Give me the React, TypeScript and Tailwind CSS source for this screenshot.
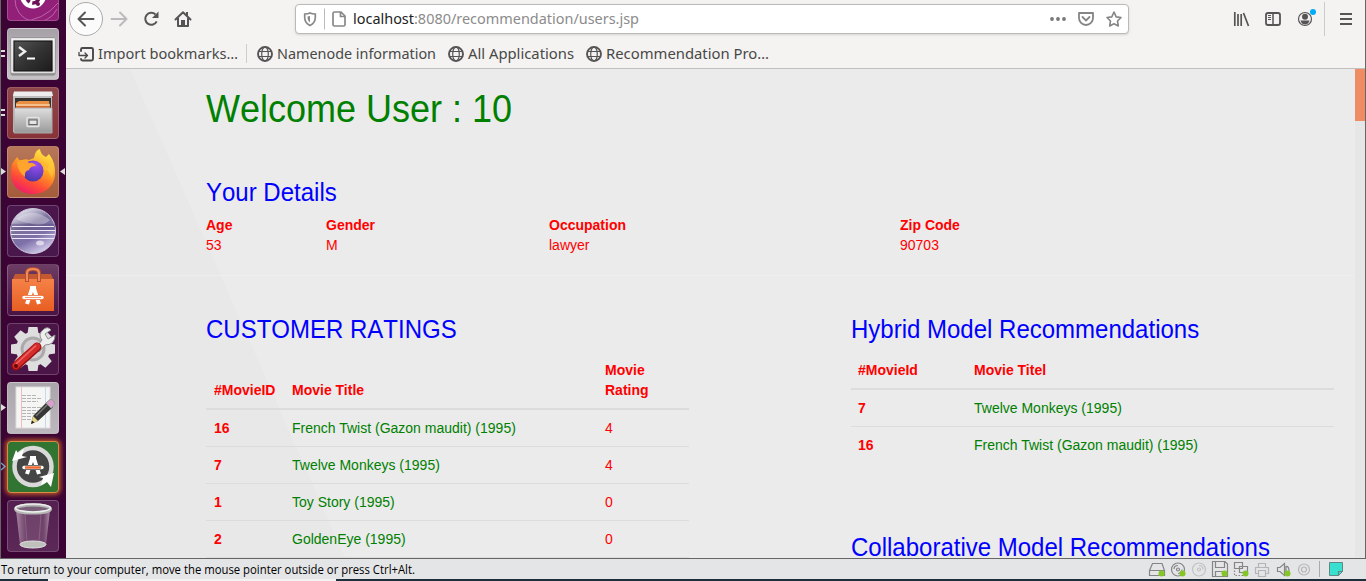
import React from 'react';

const UBUNTU = "font-['Noto_Sans',sans-serif]";

function Label({ text, w, className = '' }: { text: React.ReactNode; w: number; className?: string }) {
  return (
    <svg width={w} height={24} className={`shrink-0 overflow-visible ${className}`}>
      <text x={0} y={17} textLength={w} lengthAdjust="spacingAndGlyphs" fill="currentColor">{text}</text>
    </svg>
  );
}

function T({ children, className = '' }: { children: React.ReactNode; className?: string }) {
  return <span className={`block origin-[0_75%] scale-y-[1.06] ${className}`}>{children}</span>;
}

function Heading({ children, className = '' }: { children: React.ReactNode; className?: string }) {
  return <h3 className={`h-[26px] origin-[0_75%] translate-y-px scale-y-[1.05] whitespace-nowrap text-[24px] leading-[26px] text-[#00f] [font-kerning:none] ${className}`}>{children}</h3>;
}

function Tile({ children, className }: { children?: React.ReactNode; className: string }) {
  return (
    <div className={`h-[52px] w-[52px] shrink-0 overflow-hidden rounded-[4px] border border-white/20 ${className}`}>
      <svg width="52" height="52" viewBox="0 0 52 52" className="-m-px">{children}</svg>
    </div>
  );
}

function AGlyph({ x = 0, y = 0, bar = '#fff' }: { x?: number; y?: number; bar?: string }) {
  return (
    <g transform={`translate(${x} ${y})`} fill="none">
      <path d="M3 18 L8.500 1 M15 18 L9.500 1" stroke="#fff" strokeWidth="4" />
      <path d="M6 1.500 H12" stroke="#fff" strokeWidth="3" />
      <path d="M-0.500 11.500 H18.500" stroke={bar === '#fff' ? '#e9602a' : '#444'} strokeWidth="5" />
      <path d="M0 11.500 H18" stroke="#fff" strokeWidth="3.400" strokeLinecap="round" />
      <path d="M1 11.500 H17" stroke={bar === '#fff' ? '#ef7a48' : bar} strokeWidth={bar === '#fff' ? 0.8 : 2.6} />
    </g>
  );
}

function Launcher() {
  return (
    <div className="relative flex w-[65px] shrink-0 flex-col overflow-hidden bg-[#3c0434] pl-[6px]">
      <svg width="0" height="0" className="absolute">
        <defs>
          <linearGradient id="steel" x1="0" y1="0" x2="0" y2="1"><stop offset="0" stopColor="#dedede" /><stop offset="1" stopColor="#999" /></linearGradient>
          <linearGradient id="screen" x1="0" y1="0" x2="1" y2="1"><stop offset="0" stopColor="#555" /><stop offset=".5" stopColor="#333" /><stop offset="1" stopColor="#1c1c1c" /></linearGradient>
          <linearGradient id="fire" x1=".8" y1="0" x2=".3" y2="1"><stop offset="0" stopColor="#fff14a" /><stop offset=".45" stopColor="#ff9a20" /><stop offset=".75" stopColor="#ff4a38" /><stop offset="1" stopColor="#ee1b6a" /></linearGradient>
          <radialGradient id="violet" cx=".65" cy=".2" r=".85"><stop offset="0" stopColor="#a04cf2" /><stop offset="1" stopColor="#4338a8" /></radialGradient>
          <linearGradient id="orb" x1=".2" y1="0" x2=".7" y2="1"><stop offset="0" stopColor="#f3f3fa" /><stop offset=".38" stopColor="#7a719c" /><stop offset=".65" stopColor="#7d70a8" /><stop offset="1" stopColor="#d9d2f1" /></linearGradient>
          <linearGradient id="bag" x1="0" y1="0" x2="0" y2="1"><stop offset="0" stopColor="#f58248" /><stop offset="1" stopColor="#e85e22" /></linearGradient>
          <linearGradient id="glass" x1="0" y1="0" x2="1" y2="0"><stop offset="0" stopColor="#c3a9bd" stopOpacity=".75" /><stop offset=".3" stopColor="#a88aa2" stopOpacity=".3" /><stop offset=".8" stopColor="#a88aa2" stopOpacity=".3" /><stop offset="1" stopColor="#c9b0c3" stopOpacity=".75" /></linearGradient>
        </defs>
      </svg>
      <div className="-mt-[31px] flex flex-col gap-[7px]">
        <Tile className="bg-[#922078]">
          <path d="M8 30 A22 22 0 0 0 50 40 M14 52 Q36 52 51 34" stroke="#bb62a8" fill="none" />
          <circle cx="26" cy="26.500" r="13" fill="#fff" />
          <circle cx="26" cy="28" r="6" fill="none" stroke="#6d1256" strokeWidth="3.500" strokeDasharray="10 2.600" />
          <circle cx="31" cy="35" r="2" fill="#6d1256" />
        </Tile>
        <Tile className="bg-gradient-to-b from-[#a6a1a6] to-[#c6c2c6]">
          <rect x="4" y="10" width="44" height="37" rx="1.500" fill="url(#steel)" stroke="#858585" />
          <rect x="5" y="11" width="42" height="33" fill="none" stroke="#f4f4f4" strokeWidth="1.500" />
          <rect x="7" y="13" width="38" height="30" fill="url(#screen)" stroke="#111" />
          <path d="M12 19 L18 23.500 L12 28" fill="none" stroke="#eee" strokeWidth="2.400" />
          <path d="M20 30.500 H28" stroke="#fff" strokeWidth="2.200" />
        </Tile>
        <Tile className="bg-gradient-to-b from-[#8d474a] to-[#893339]">
          <path d="M7 5 H45 V45 H6 V9 Z" fill="#bebebe" />
          <path d="M7 4.500 H45 L46 9 H6 Z" fill="#ededed" />
          <rect x="8" y="11" width="36" height="11" fill="#343330" />
          <path d="M9 16 L12 14 H42 L43 21 H9 Z" fill="#e98f43" /><path d="M9 18 H43" stroke="#fff0d5" />
          <path d="M9 20 H43" stroke="#d15b20" strokeWidth="1.500" />
          <path d="M7 21 H45 V46 H7 Z" fill="url(#steel)" stroke="#aaa" />
          <rect x="20" y="30.500" width="12" height="9" rx="1" fill="#aaa" stroke="#e4e4e4" strokeWidth="1.500" />
          <rect x="22" y="33" width="8" height="4.500" fill="#e5e5e5" stroke="#656565" />
        </Tile>
        <Tile className="bg-gradient-to-b from-[#b77759] to-[#a45c3b]">
          <path d="M5 18 L10 11 L13 15 Q18 12 22 14 L27 12 Q28 4 33 3 Q33 8 39 11 L42 8 Q49 17 48 29 C47 41 37 48 26 48 C12 48 3 38 4 27 Q4 22 5 18 Z" fill="url(#fire)" />
          <circle cx="26" cy="25" r="10.500" fill="url(#violet)" />
          <path d="M10 15 Q17 12 22 17 Q27 16 29 20 Q23 20 22 24 Q17 25 18 31 Q10 25 10 15" fill="#ffa52d" />
          <path d="M32 9 Q38 16 38 25 Q44 20 42 11 Q49 20 45 32" fill="#ffc83a" opacity=".7" />
        </Tile>
        <Tile className="bg-[#49174b]">
          <circle cx="26" cy="26" r="22.500" fill="url(#orb)" stroke="#cfc9dc" />
          <path d="M9 14 Q26 1 43 15 Q35 23 22 18 Q14 17 9 14" fill="#fff" opacity=".3" />
          <path d="M4 20.500 H48 M4 24 H48" stroke="#5a4a80" strokeWidth="3.500" opacity=".45" />
          <path d="M5 21.500 H47 M4 25.500 H48 M4 29.500 H48 M5 33.500 H47" stroke="#eeeaf8" strokeWidth="1.200" />
          <ellipse cx="33" cy="38" rx="4" ry="2.500" fill="#fff" opacity=".6" />
        </Tile>
        <Tile className="bg-gradient-to-b from-[#6c3c64] to-[#491344]">
          <path d="M8 10 H44 L47 17 H5 Z" fill="#c35930" />
          <path d="M5 15 H47 V47 H5 Z" fill="url(#bag)" />
          <path d="M20 18 V9 Q20 5 26 5 Q32 5 32 9 V18" fill="none" stroke="#b94e2c" strokeWidth="4" />
          <path d="M20 17 V9 Q20 5 26 5 Q32 5 32 9 V17" fill="none" stroke="#ef8a5c" strokeWidth="2" />
          <AGlyph x={17} y={22} />
        </Tile>
        <Tile className="bg-[#4b1548]">
          <g fill="#dedede">
            {[0, 45, 90, 135, 180, 225, 270, 315].map((a) => <path key={a} d="M21.500 4 H30.500 L32 14 H20 Z" transform={`rotate(${a} 26 26)`} />)}
            <circle cx="26" cy="26" r="17" />
          </g>
          <circle cx="26" cy="26" r="11" fill="#d3ccd3" stroke="#aaa" strokeWidth="3" />
          <path d="M29 25 L35 17 Q30 11 37 6 Q41 3 44 7 L38 11 L41 16 L48 12 Q48 22 38 22 L32 29 Z" fill="#eee" stroke="#8e8e8e" />
          <path d="M9 43 L30 24" stroke="#9e1010" strokeWidth="9" strokeLinecap="round" />
          <path d="M9 42.500 L30 23.500" stroke="#d42b2b" strokeWidth="6.500" strokeLinecap="round" />
          <path d="M9 41 L29 22.500" stroke="#ed6966" strokeWidth="1.500" /><circle cx="9" cy="43" r="2" fill="#6c0707" />
        </Tile>
        <Tile className="bg-gradient-to-b from-[#aaa5aa] to-[#bdb8bd]">
          <rect x="9" y="5" width="34" height="41" fill="#f5f5f3" stroke="#ddd" />
          <path d="M14.500 5 V46" stroke="#f2b9c1" /><path d="M38.500 5 V46" stroke="#c4d8ee" />
          <path d="M15 13.500 H29 M15 16.500 H35 M15 19.500 H31 M15 25.500 H34 M15 28.500 H31 M15 31.500 H32 M15 34.500 H25 M15 37.500 H27" stroke="#b5b5b5" strokeDasharray="4 1" />
          <path d="M24 42 L26 34 L40 20 L46 25 L31 39 Z" fill="#363735" />
          <path d="M29 34 L42 21" stroke="#777" strokeWidth="1.500" />
          <path d="M24 42 L26 34 L31 39 Z" fill="#e8d78a" /><path d="M24 42 L25 38.500 L27.500 40.500 Z" fill="#222" />
          <path d="M39 21 L43 17.500 Q48 18 47.500 22.500 L44 26 Z" fill="#d9a0cc" stroke="#999" />
        </Tile>
        <Tile className="border-[#dc8b42]! bg-[#327432] shadow-[0_0_4px_2px_#b2532b]">
          <circle cx="26" cy="25.500" r="18.500" fill="#454545" stroke="#d9d9d9" strokeWidth="4.500" />
          <path d="M5 20 L9 9 L11 12 L17 8 L15 15 L20 16 Z" fill="#fff" />
          <path d="M47 32 L44 46 L40 41 L34 44 L36 37 L32 36 Z" fill="#fff" />
          <AGlyph x={17} y={15} bar="#f06832" />
        </Tile>
        <Tile className="bg-gradient-to-b from-[#53204f] to-[#5c2858]">
          <path d="M9 10 H43 L39 45 Q26 51 13 45 Z" fill="url(#glass)" />
          <ellipse cx="26" cy="44.500" rx="13" ry="3.500" fill="#bfc0bb" stroke="#dedede" />
          <path d="M18 14 L20 42 M34 14 L32 42" stroke="#d1b6cb" opacity=".25" />
          <ellipse cx="26" cy="9" rx="17.500" ry="4" fill="#796078" stroke="#b5b5b3" strokeWidth="3" />
          <ellipse cx="26" cy="8" rx="17.500" ry="4" fill="none" stroke="#eee" strokeWidth="1.500" />
        </Tile>
      </div>
      <svg width="65" height="558" className="absolute inset-0" fill="#ddd">
        <path d="M0 50 h4 v2 h-4z M0 55 h4 v2 h-4z M0 109 h4 v2 h-4z M0 114 h4 v2 h-4z" />
        <path d="M0 168 l5 3.500 l-5 3.500z M64 168 l-5 3.500 l5 3.500z M0 404 l5 3.500 l-5 3.500z" />
        <path d="M0 463 l4 3.500 l-4 3.500" fill="none" stroke="#77a9d5" strokeWidth="1.300" />
      </svg>
    </div>
  );
}

function Globe() {
  return (
    <svg width="16" height="16" viewBox="0 0 16 16" fill="none" stroke="#555" strokeWidth="1.200" className="shrink-0">
      <circle cx="8" cy="8" r="7" strokeWidth="1.900" /><ellipse cx="8" cy="8" rx="3.300" ry="7" /><path d="M1.500 5.500 H14.500 M1.500 10.500 H14.500" />
    </svg>
  );
}

function NavBar() {
  return (
    <div className="flex h-[39px] items-center">
      <svg width="229" height="39" viewBox="66 0 229 39" fill="none" stroke="#555" strokeWidth="2" className="shrink-0">
        <circle cx="86" cy="19" r="16.500" fill="#fbfbfb" stroke="#aaa" strokeWidth="1" />
        <path d="M93.500 19 H79 M85 12.500 L78.500 19 L85 25.500" strokeLinecap="round" strokeLinejoin="round" />
        <path d="M111.500 19 H126 M120 12.500 L126.500 19 L120 25.500" stroke="#bbb" strokeLinecap="round" strokeLinejoin="round" />
        <path d="M155.500 14.500 A6 6 0 1 0 156.700 21.300" /><path d="M158.500 11.500 V18 H152 Z" fill="#555" stroke="none" />
        <path d="M175.500 19.500 L183 12.300 L190.500 19.500 M178 18 V26 H188 V18" strokeLinecap="round" strokeLinejoin="round" /><path d="M181 26 V20 H185 V26 Z" fill="#555" stroke="none" /><path d="M187 12 V16" />
      </svg>
      <div className="-mt-px flex h-[30px] w-[834px] shrink-0 items-center rounded-[4px] border border-[#bcbab8] bg-white shadow-sm">
        <svg width="57" height="28" viewBox="296 5 57 28" fill="none" stroke="#888" strokeWidth="1.700" className="shrink-0">
          <path d="M310 13 C308 14 306 14 304.700 14 V18 C305 22 307 24 310 25.500 C313 24 315 22 315.300 18 V14 C314 14 312 14 310 13 Z" /><path d="M310 16 V22.500 C308 21 307.500 19 307.500 16.500 Z" fill="#888" stroke="none" />
          <path d="M324.500 8.500 V29.500" stroke="#bbb" strokeWidth="1" />
          <path d="M334.500 12 H341 L345 16 V24.500 Q345 26 343.500 26 H334.500 Q333 26 333 24.500 V13.500 Q333 12 334.500 12 Z M340.500 12 V16.500 H345" />
        </svg>
        <Label w={286} text={<><tspan fill="#222">localhost</tspan><tspan fill="#8b8b8b">:8080/recommendation/users.jsp</tspan></>} className={`${UBUNTU} text-[15px]`} />
        <svg width="86" height="28" viewBox="1042 5 86 28" fill="none" stroke="#858585" strokeWidth="1.800" className="ml-auto shrink-0">
          <g fill="#777" stroke="none"><circle cx="1052" cy="19" r="1.900" /><circle cx="1058" cy="19" r="1.900" /><circle cx="1064" cy="19" r="1.900" /></g>
          <path d="M1079 13 H1093 V18 A7 7 0 0 1 1079 18 Z" strokeLinejoin="round" /><path d="M1082.500 17 L1086 20.500 L1089.500 17" strokeLinecap="round" />
          <path d="M1114 12 L1116.200 16.900 L1121 17.500 L1117.500 21 L1118.300 26 L1114 23.700 L1109.700 26 L1110.500 21 L1107 17.500 L1111.800 16.900 Z" strokeLinejoin="round" strokeWidth="1.600" />
        </svg>
      </div>
      <svg width="236" height="39" viewBox="1129 0 236 39" fill="none" stroke="#555" strokeWidth="1.800" className="shrink-0">
        <path d="M1234.800 12 V26 M1238 14 V26 M1241.200 14 V26 M1243.500 13 L1248.500 26" strokeWidth="1.700" />
        <rect x="1266" y="13" width="14" height="12" rx="2" /><path d="M1273 13 V25" strokeWidth="1.500" /><path d="M1268 15.500 H1271 M1268 17.500 H1271 M1268 19.500 H1271" strokeWidth="1" />
        <circle cx="1305" cy="19" r="6.500" strokeWidth="1.200" /><circle cx="1305" cy="16.800" r="3" fill="#555" stroke="none" /><path d="M1300.500 20.500 H1309.500 Q1308.500 24.500 1305 24.500 Q1301.500 24.500 1300.500 20.500 Z" fill="#555" stroke="none" />
        <circle cx="1313" cy="12" r="3" fill="#00adf5" stroke="none" />
        <path d="M1324.500 2 V36" stroke="#ccc" strokeWidth="1" /><path d="M1340 14 H1352 M1340 19 H1352 M1340 24 H1352" strokeWidth="2" />
      </svg>
    </div>
  );
}

function Bookmarks() {
  return (
    <div className={`flex h-[30px] items-center border-b border-[#c2c0be] pl-3 text-[15px] text-[#484848] ${UBUNTU}`}>
      <svg width="16" height="16" viewBox="0 0 16 16" fill="none" stroke="#484848" strokeWidth="1.900" strokeLinecap="round" strokeLinejoin="round" className="shrink-0"><path d="M3 5 V3.500 Q3 2 4.500 2 H13.500 Q15 2 15 3.500 V13 Q15 14.500 13.500 14.500 H4.500 Q3 14.500 3 13" /><path d="M1 6.500 V9.500 H9.500 M7 7 L9.500 9.500 L7 12" strokeWidth="1.300" /></svg>
      <Label w={140} text="Import bookmarks…" className="ml-1" />
      <div className="ml-2 mr-2.5 h-[19px] w-px bg-[#cfcdcb]" />
      <Globe /><Label w={159} text="Namenode information" className="ml-1 mr-3" />
      <Globe /><Label w={106} text="All Applications" className="ml-1 mr-3" />
      <Globe /><Label w={163} text="Recommendation Pro…" className="ml-1" />
    </div>
  );
}

const ratings = [
  ['16', 'French Twist (Gazon maudit) (1995)', '4'],
  ['7', 'Twelve Monkeys (1995)', '4'],
  ['1', 'Toy Story (1995)', '0'],
  ['2', 'GoldenEye (1995)', '0'],
];
const hybrid = [['7', 'Twelve Monkeys (1995)'], ['16', 'French Twist (Gazon maudit) (1995)']];
const details = [['Age', '53'], ['Gender', 'M'], ['Occupation', 'lawyer'], ['Zip Code', '90703']];

function Content() {
  return (
    <div className="relative flex min-h-0 flex-1 overflow-hidden bg-[#ebebeb] font-['Liberation_Sans',sans-serif] text-[14px] leading-5 text-[#f00]">
      <svg width="1289" height="489" className="absolute inset-0"><path d="M0 0 H64 L279 489 H0 Z" fill="#e8e8e8" /><path d="M0 206.500 H1289" stroke="#eeeeee" /></svg>
      <div className="relative flex-1 pl-[140px] pt-5">
        <h1 className="h-10 origin-[0_82%] translate-y-px scale-y-[1.06] text-[36px] leading-10 text-[#008000] [font-kerning:none]">Welcome User : 10</h1>
        <Heading className="mt-[50px]">Your Details</Heading>
        <div className="mt-[10px] grid grid-cols-[120px_223px_351px_1fr]">
          {details.map(([k, v]) => <div key={k}><T className="font-bold">{k}</T><T>{v}</T></div>)}
        </div>
        <div className="mt-[61px] flex gap-[162px]">
          <section className="w-[483px]">
            <Heading>CUSTOMER RATINGS</Heading>
            <div className="mt-[10px] grid h-[58px] grid-cols-[78px_313px_84px] items-end border-b-2 border-[#dcdcdc] pb-2 pl-2 font-bold">
              <T>#MovieID</T><T>Movie Title</T><div><T>Movie</T><T>Rating</T></div>
            </div>
            {ratings.map(([id, title, score]) => (
              <div key={id} className="grid h-[37px] grid-cols-[78px_313px_84px] border-b border-[#dcdcdc] pl-2 pt-2">
                <T className="font-bold">{id}</T><T className="text-[#008000]">{title}</T><T>{score}</T>
              </div>
            ))}
          </section>
          <section className="w-[483px]">
            <Heading>Hybrid Model Recommendations</Heading>
            <div className="mt-[10px] grid h-[38px] grid-cols-[116px_1fr] border-b-2 border-[#dcdcdc] pl-[7px] pt-2 font-bold"><T>#MovieId</T><T>Movie Titel</T></div>
            {hybrid.map(([id, title]) => (
              <div key={id} className="grid h-[37px] grid-cols-[116px_1fr] border-b border-[#dcdcdc] pl-[7px] pt-2 last-of-type:border-0">
                <T className="font-bold">{id}</T><T className="text-[#008000]">{title}</T>
              </div>
            ))}
            <Heading className="mt-[70px]">Collaborative Model Recommendations</Heading>
          </section>
        </div>
      </div>
      <div className="relative w-[10px] bg-[#e6e6e6]"><div className="h-[52px] bg-[#f08c64]" /></div>
    </div>
  );
}

function StatusBar() {
  return (
    <div className="flex h-5 shrink-0 items-center justify-between bg-[#e4e5e7] pl-px font-['Open_Sans',sans-serif] text-[12px] text-black">
      <Label w={414} text="To return to your computer, move the mouse pointer outside or press Ctrl+Alt." className="h-5 -translate-y-0.5" />
      <svg width="218" height="20" viewBox="1148 560 218 20" fill="none" stroke="#858585" strokeWidth="1.200">
        <path d="M1149.500 571.500 L1152.500 564.500 H1162 L1164.500 571.500 V576.500 H1149.500 Z M1149.500 571.500 H1164.500" />
        <circle cx="1178" cy="570.500" r="6.500" /><circle cx="1178" cy="570.500" r="1.500" /><path d="M1174 570 Q1174 566.500 1178 566.500 M1182 570.500 Q1182 574.500 1178 574.500" />
        <g stroke="#c2c2c2"><circle cx="1199" cy="570.500" r="6.500" /><circle cx="1199" cy="570.500" r="1.500" /><path d="M1199 566.500 Q1203 566.500 1203 570.500" /></g>
        <path d="M1212.500 562.500 H1225 L1227.500 565 V577.500 H1212.500 Z M1215.500 562.500 V568.500 H1224.500 V562.500 M1215.500 577.500 V572.500 H1224.500 V577.500" />
        <path d="M1234.500 563.500 H1242.500 V569.500 H1234.500 Z M1239.500 567.500 H1247.500 V573.500 H1239.500 Z" /><path d="M1234.500 571.500 V576.500 H1244" strokeDasharray="1.500 1.500" />
        <g stroke="#b5b5b5"><path d="M1258.500 568.500 V564.500 H1265.500 V568.500 M1258.500 574.500 H1255.500 V568.500 H1268.500 V574.500 H1265.500 M1258.500 571.500 H1265.500 V577.500 H1258.500 Z" /><circle cx="1304" cy="570.500" r="5.500" /><circle cx="1304" cy="570.500" r="2.500" /></g>
        <path d="M1277.500 568.500 H1280 L1284.500 564.500 V576.500 L1280 572.500 H1277.500 Z M1286 573 V567.500 Q1289 567 1289 572" />
        <g fill="#83c625" stroke="none"><circle cx="1161.500" cy="574.500" r="3" /><circle cx="1182.500" cy="574.500" r="3" /><circle cx="1224.500" cy="574.500" r="3" /><circle cx="1245.500" cy="574.500" r="3" /><circle cx="1287.500" cy="574.500" r="3" /></g>
        <path d="M1319.500 562 V578" stroke="#aaa" strokeWidth="1" />
        <path d="M1329.500 563.500 H1342.500 V572.500 L1338.500 576.500 H1329.500 Z" fill="#3ae0cf" stroke="#5f8784" strokeWidth="1" /><path d="M1338.500 576.500 V572.500 H1342.500" stroke="#5f8784" />
      </svg>
    </div>
  );
}

export default function App() {
  return (
    <div className="flex h-[581px] w-[1366px] flex-col overflow-hidden bg-[#e4e5e7]">
      <div className="flex h-[559px] shrink-0 border-x border-b border-[#666]">
        <Launcher />
        <main className="flex min-w-0 flex-1 flex-col bg-[#f4f3f1]">
          <NavBar />
          <Bookmarks />
          <Content />
        </main>
      </div>
      <StatusBar />
      <div className="flex h-0.5 shrink-0 bg-[#1c303c]"><div className="ml-12 w-[288px] bg-[#f2f2f2]" /></div>
    </div>
  );
}
